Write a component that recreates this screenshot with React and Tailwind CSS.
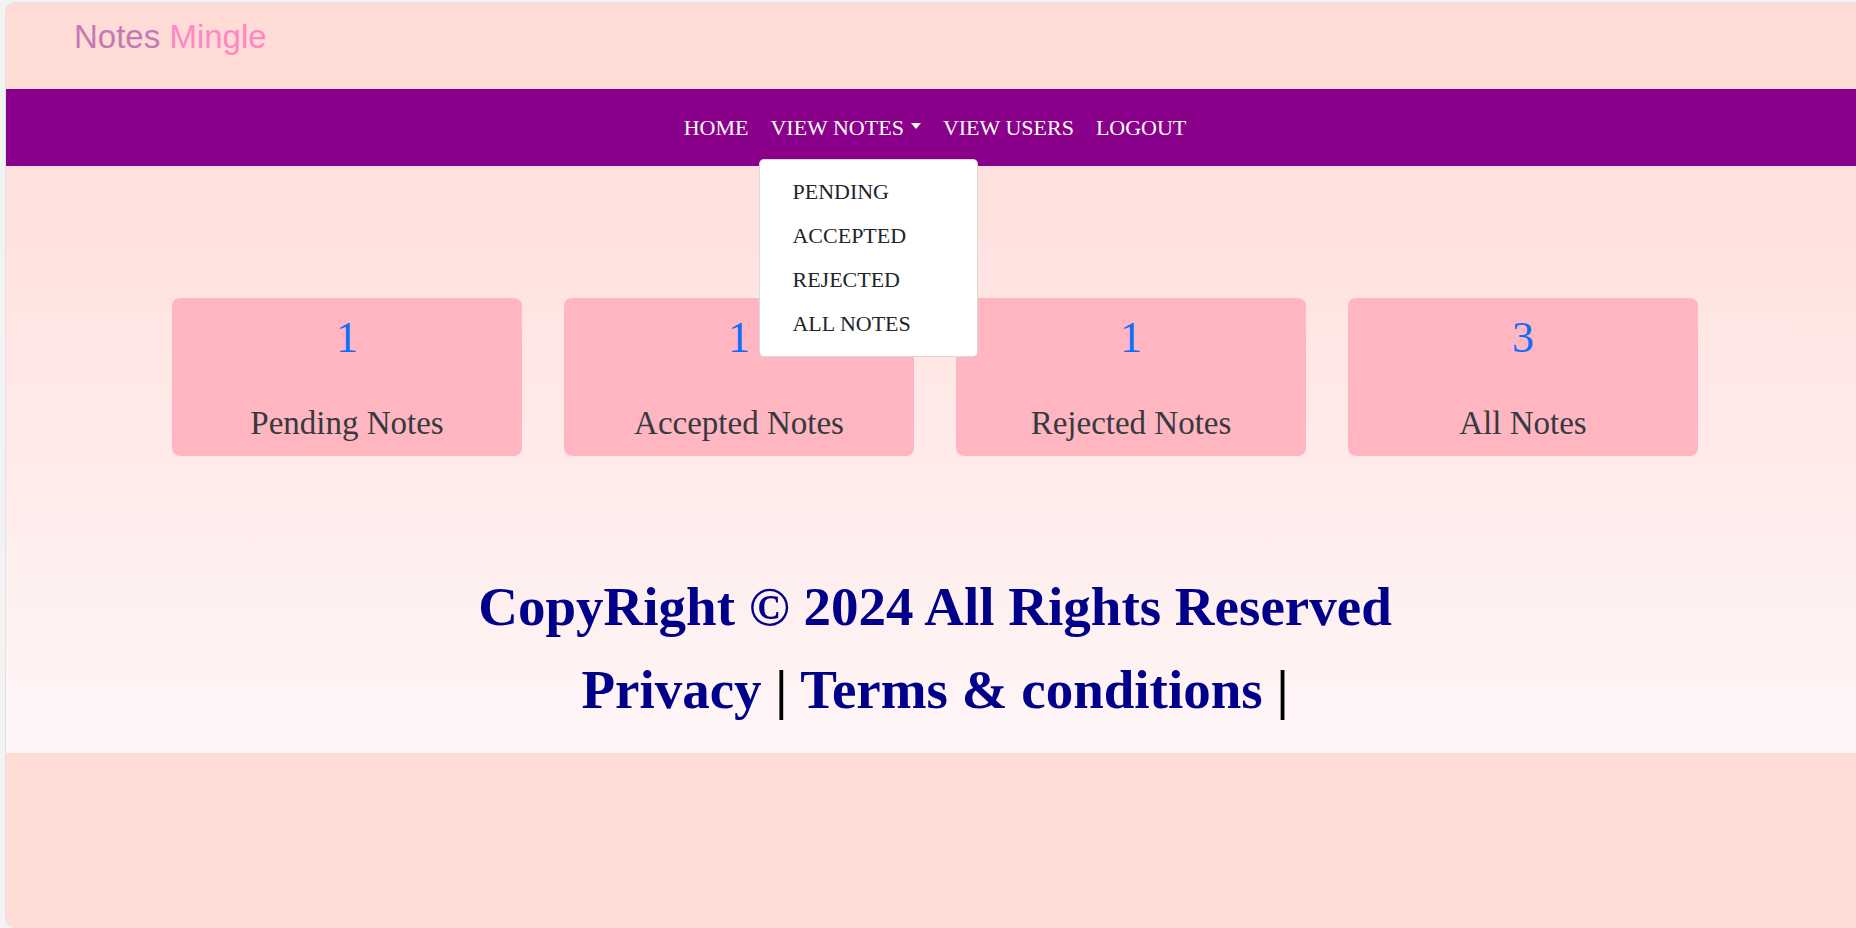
import React from 'react'

const STATS = [
  { count: 1, label: 'Pending Notes' },
  { count: 1, label: 'Accepted Notes' },
  { count: 1, label: 'Rejected Notes' },
  { count: 3, label: 'All Notes' },
]

const MENU = ['PENDING', 'ACCEPTED', 'REJECTED', 'ALL NOTES']

export default function App() {
  return (
    <div className="h-screen w-full overflow-hidden bg-[#f3f3f3] pl-[5px] pt-[2px]">
      <div className="w-[1859px] h-[926px] bg-[#ffdcd6] rounded-l-[10px] border-l border-t border-[#e2e2e2] overflow-hidden flex flex-col">
        {/* Brand */}
        <header className="h-[86px] shrink-0 pl-[68px] pt-[15px]">
          <span className="font-['Liberation_Sans',Arial,sans-serif] text-[33px] leading-[38px]">
            <span className="text-[#c47ab4]">Notes</span>{' '}
            <span className="text-[#ff87c3]">Mingle</span>
          </span>
        </header>

        {/* Nav */}
        <nav className="h-[77px] shrink-0 bg-[#8b008b] flex items-center justify-center font-['Liberation_Serif','Times_New_Roman',serif] text-white text-[22px] leading-[25px]">
          <a className="px-[11px] py-[8px]">HOME</a>
          <div className="relative">
            <a className="px-[11px] py-[8px] inline-flex items-center">
              VIEW NOTES
              <span className="ml-[7px] mb-[3px] w-0 h-0 border-t-[6px] border-t-white border-x-[5.5px] border-x-transparent" />
            </a>
            {/* Dropdown */}
            <div className="absolute left-0 top-[calc(100%+11px)] z-10 w-[219px] bg-white border border-[#00000026] rounded-[5px] py-[10px]">
              {MENU.map((m) => (
                <div key={m} className="h-[44px] leading-[44px] pl-[32px] text-[#212529]">
                  {m}
                </div>
              ))}
            </div>
          </div>
          <a className="px-[11px] py-[8px]">VIEW USERS</a>
          <a className="px-[11px] py-[8px]">LOGOUT</a>
        </nav>

        {/* Main */}
        <main className="shrink-0 bg-gradient-to-b from-[#ffe0dc] to-[#fff6f8] pt-[132px] pb-[22px] font-['Liberation_Serif','Times_New_Roman',serif]">
          <div className="flex justify-center gap-[42px]">
            {STATS.map((s) => (
              <div key={s.label} className="w-[350px] rounded-[8px] bg-[#ffb6c1] pt-[13px] pb-[14px] text-center">
                <div className="text-[44px] leading-[53px] text-[#0d6efd]">{s.count}</div>
                <div className="mt-[40px] text-[33px] leading-[38px] text-[#353a40]">{s.label}</div>
              </div>
            ))}
          </div>

          {/* Footer */}
          <footer className="mt-[109px] text-center font-bold text-[55px] leading-[83px] text-[#00008b]">
            <div>CopyRight © 2024 All Rights Reserved</div>
            <div>
              Privacy <span className="text-black">|</span> Terms &amp; conditions{' '}
              <span className="text-black">|</span>
            </div>
          </footer>
        </main>
      </div>
    </div>
  )
}
